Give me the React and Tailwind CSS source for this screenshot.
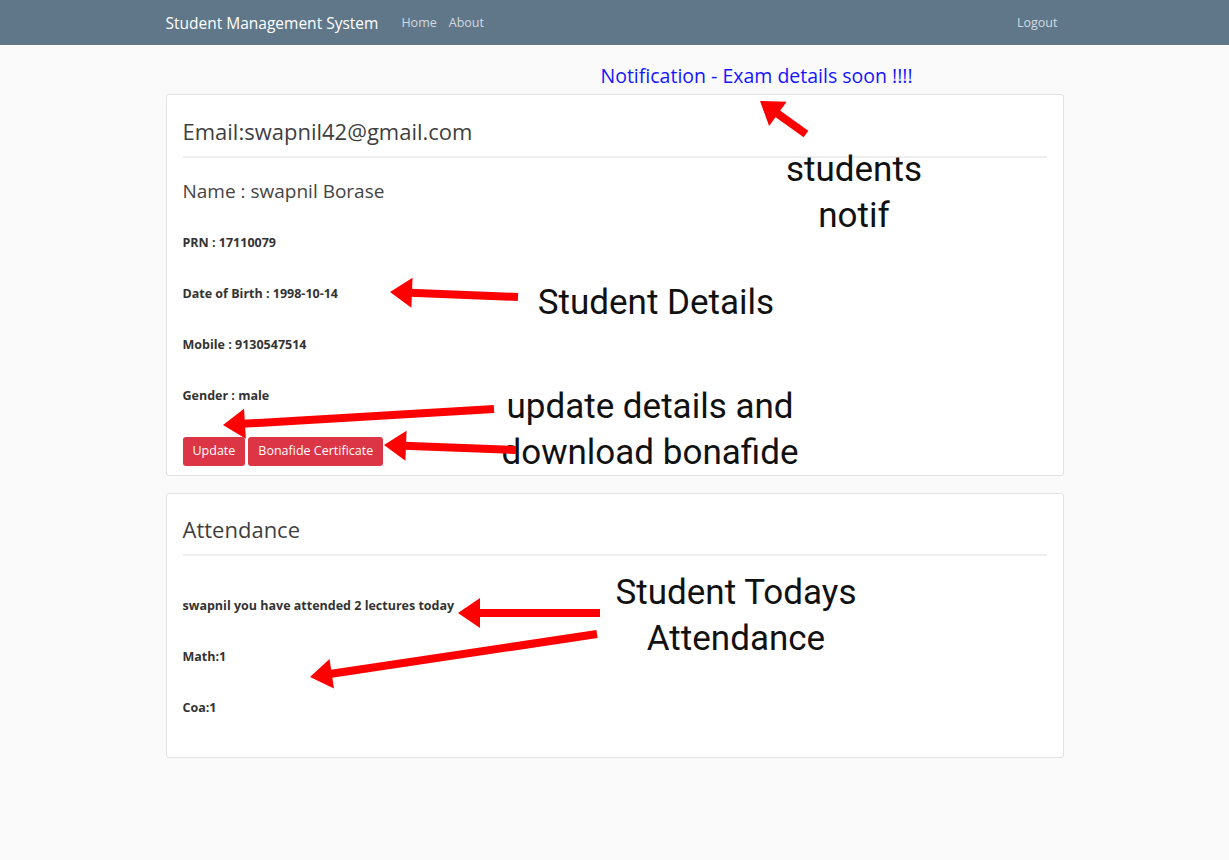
import React from "react";

const arrows = [
  { from: [806, 134], to: [760, 101] },
  { from: [518, 297], to: [390, 292] },
  { from: [494, 409], to: [223, 425] },
  { from: [516, 450], to: [384, 445] },
  { from: [600, 613], to: [458, 613] },
  { from: [597, 634], to: [310, 677] },
];

function Arrow({ from, to }) {
  const dx = to[0] - from[0];
  const dy = to[1] - from[1];
  const len = Math.hypot(dx, dy);
  const ux = dx / len;
  const uy = dy / len;
  const headLen = 22;
  const headW = 15;
  const bx = to[0] - ux * headLen;
  const by = to[1] - uy * headLen;
  const p1 = [bx - uy * headW, by + ux * headW];
  const p2 = [bx + uy * headW, by - ux * headW];
  return (
    <g>
      <line x1={from[0]} y1={from[1]} x2={bx + ux * 2} y2={by + uy * 2} stroke="#ff0000" strokeWidth="8" />
      <polygon points={`${to[0]},${to[1]} ${p1[0]},${p1[1]} ${p2[0]},${p2[1]}`} fill="#ff0000" />
    </g>
  );
}

function Note({ className, children }) {
  return (
    <div
      className={`absolute text-center text-[35px] leading-[46px] text-[#111] ${className}`}
      style={{ fontFamily: "Roboto, sans-serif" }}
    >
      {children}
    </div>
  );
}

export default function App() {
  return (
    <div
      className="relative min-h-[860px] bg-[#fafafa] text-[#333]"
      style={{ fontFamily: "'Open Sans', 'Noto Sans', sans-serif" }}
    >
      <nav className="h-[45px] bg-[#607789]">
        <div className="mx-auto flex h-full w-[898px] items-center pt-[2px]">
          <span className="text-[15.5px] text-white">Student Management System</span>
          <div className="ml-[23px] flex gap-[12px] text-[12.5px] text-[#d3dae0]">
            <span>Home</span>
            <span>About</span>
          </div>
          <span className="ml-auto mr-[6px] text-[12.5px] text-[#d3dae0]">Logout</span>
        </div>
      </nav>

      <div className="mx-auto w-[898px]">
        <div className="flex h-[49px] items-center pl-[435px] pt-[12px]">
          <span className="text-[19.5px] text-[#1515ff]">Notification - Exam details soon !!!!</span>
        </div>

        <div className="rounded-[3px] border border-[#e2e2e2] bg-white px-[16px] pb-[9px]">
          <h2 className="pt-[21px] pb-[10px] text-[22px] leading-[30px] text-[#3f3f3f]">Email:swapnil42@gmail.com</h2>
          <hr className="border-t-2 border-[#eeeeee]" />
          <h3 className="pt-[20px] text-[19px] leading-[26px] text-[#444]">Name : swapnil Borase</h3>
          <div className="mt-[30px] flex flex-col gap-[33px] text-[12.5px] font-bold leading-[18px] text-[#333]">
            <p>PRN : 17110079</p>
            <p>Date of Birth : 1998-10-14</p>
            <p>Mobile : 9130547514</p>
            <p>Gender : male</p>
          </div>
          <div className="mt-[32px] flex gap-[3px]">
            <button className="h-[29px] rounded-[3px] bg-[#dc3545] px-[10px] text-[12.5px] text-white">Update</button>
            <button className="h-[29px] rounded-[3px] bg-[#dc3545] px-[10px] text-[12.5px] text-white">Bonafide Certificate</button>
          </div>
        </div>

        <div className="mt-[17px] rounded-[3px] border border-[#e2e2e2] bg-white px-[16px] pb-[40px]">
          <h2 className="pt-[20px] pb-[10px] text-[22px] leading-[30px] text-[#3f3f3f]">Attendance</h2>
          <hr className="border-t-2 border-[#eeeeee]" />
          <div className="mt-[41px] flex flex-col gap-[33px] text-[12.5px] font-bold leading-[18px] text-[#333]">
            <p>swapnil you have attended 2 lectures today</p>
            <p>Math:1</p>
            <p>Coa:1</p>
          </div>
        </div>
      </div>

      <Note className="left-[754px] top-[147px] w-[200px]">
        students
        <br />
        notif
      </Note>
      <Note className="left-[526px] top-[280px] w-[260px]">Student Details</Note>
      <Note className="left-[490px] top-[384px] w-[320px]">
        update details and
        <br />
        download bonafide
      </Note>
      <Note className="left-[596px] top-[570px] w-[280px]">
        Student Todays
        <br />
        Attendance
      </Note>

      <svg className="pointer-events-none absolute left-0 top-0" width="1229" height="860">
        {arrows.map((a, i) => (
          <Arrow key={i} from={a.from} to={a.to} />
        ))}
      </svg>
    </div>
  );
}
